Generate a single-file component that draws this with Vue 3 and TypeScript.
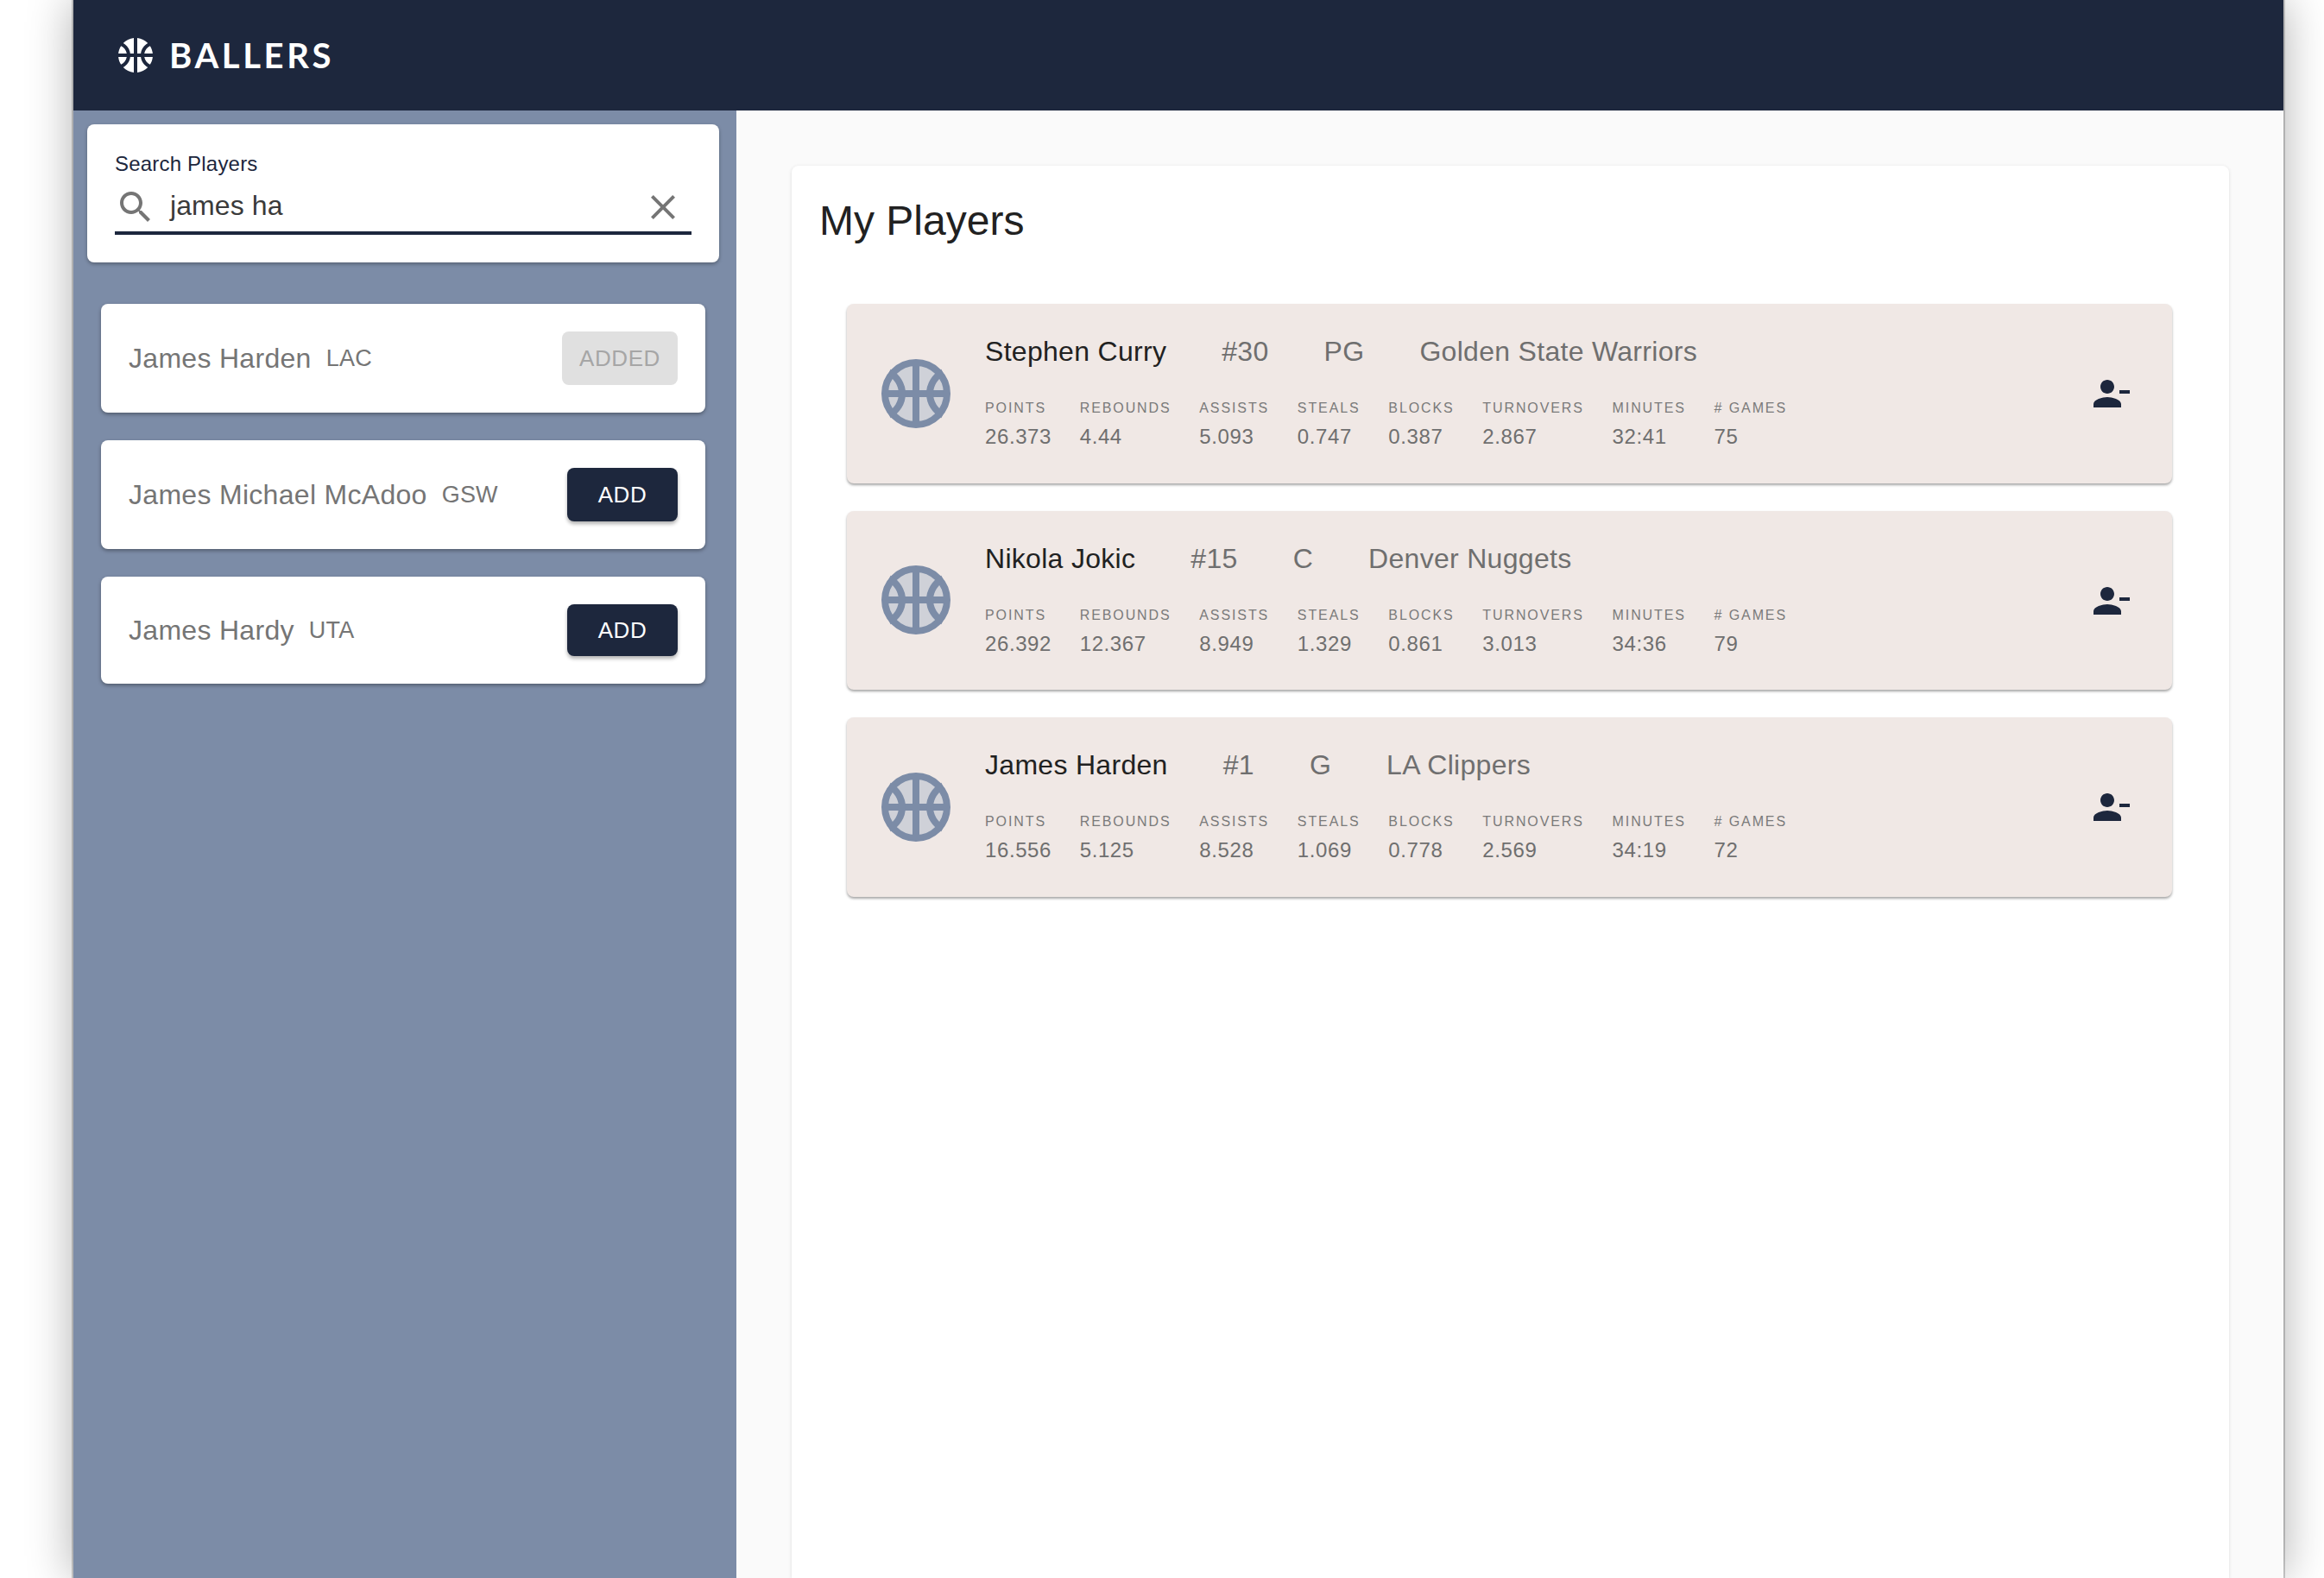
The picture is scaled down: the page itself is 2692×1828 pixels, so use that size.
<script setup lang="ts">
interface Result { name: string; team: string; added: boolean }
interface Stat { label: string; value: string }
interface Player { name: string; num: string; pos: string; team: string; values: string[] }

const results: Result[] = [
  { name: 'James Harden', team: 'LAC', added: true },
  { name: 'James Michael McAdoo', team: 'GSW', added: false },
  { name: 'James Hardy', team: 'UTA', added: false },
]
const labels = ['POINTS', 'REBOUNDS', 'ASSISTS', 'STEALS', 'BLOCKS', 'TURNOVERS', 'MINUTES', '# GAMES']
const players: Player[] = [
  { name: 'Stephen Curry', num: '#30', pos: 'PG', team: 'Golden State Warriors', values: ['26.373', '4.44', '5.093', '0.747', '0.387', '2.867', '32:41', '75'] },
  { name: 'Nikola Jokic', num: '#15', pos: 'C', team: 'Denver Nuggets', values: ['26.392', '12.367', '8.949', '1.329', '0.861', '3.013', '34:36', '79'] },
  { name: 'James Harden', num: '#1', pos: 'G', team: 'LA Clippers', values: ['16.556', '5.125', '8.528', '1.069', '0.778', '2.569', '34:19', '72'] },
]
const stats = (p: Player): Stat[] => labels.map((label, i) => ({ label, value: p.values[i] }))
const ball = 'M17.09 11h4.86c-.16-1.61-.71-3.11-1.54-4.4-1.73.83-2.99 2.45-3.32 4.4zM6.91 11c-.33-1.95-1.59-3.57-3.32-4.4-.83 1.29-1.38 2.79-1.54 4.4h4.86zM15.07 11c.32-2.59 1.88-4.79 4.06-6-1.6-1.63-3.74-2.71-6.13-2.95V11h2.07zM8.93 11H11V2.05C8.61 2.29 6.46 3.37 4.87 5c2.18 1.21 3.74 3.41 4.06 6zM15.07 13H13v8.95c2.39-.24 4.54-1.32 6.13-2.95-2.18-1.21-3.74-3.41-4.06-6zM3.59 17.4c1.72-.83 2.99-2.46 3.32-4.4H2.05c.16 1.61.71 3.11 1.54 4.4zM17.09 13c.33 1.95 1.59 3.57 3.32 4.4.83-1.29 1.38-2.79 1.54-4.4h-4.86zM8.93 13c-.32 2.59-1.88 4.79-4.06 6 1.6 1.63 3.74 2.71 6.13 2.95V13H8.93z'
</script>

<template>
  <div class="page">
    <div class="window">
      <header class="top">
        <svg class="logo" viewBox="0 0 24 24"><path :d="ball" fill="#fff" /></svg>
        <span class="brand">BALLERS</span>
      </header>
      <div class="body">
        <aside class="side">
          <div class="search">
            <label class="search-label">Search Players</label>
            <div class="search-row">
              <svg class="icon48" viewBox="0 0 24 24"><path fill="#757575" d="M15.5 14h-.79l-.28-.27C15.41 12.59 16 11.11 16 9.5 16 5.91 13.09 3 9.5 3S3 5.91 3 9.5 5.91 16 9.5 16c1.61 0 3.09-.59 4.23-1.57l.27.28v.79l5 4.99L20.49 19l-4.99-5zm-6 0C7.01 14 5 11.99 5 9.5S7.01 5 9.5 5 14 7.01 14 9.5 11.99 14 9.5 14z" /></svg>
              <span class="search-text">james ha</span>
              <svg class="icon48" viewBox="0 0 24 24"><path fill="#757575" d="M19 6.41 17.59 5 12 10.59 6.41 5 5 6.41 10.59 12 5 17.59 6.41 19 12 13.41 17.59 19 19 17.59 13.41 12z" /></svg>
            </div>
          </div>
          <ul class="results">
            <li v-for="r in results" :key="r.name" class="result">
              <span class="r-name">{{ r.name }}</span>
              <span class="r-team">{{ r.team }}</span>
              <button class="btn" :class="{ disabled: r.added }">{{ r.added ? 'ADDED' : 'ADD' }}</button>
            </li>
          </ul>
        </aside>
        <main class="main">
          <section class="panel">
            <h1 class="title">My Players</h1>
            <div class="players">
              <article v-for="p in players" :key="p.name" class="player">
                <svg class="ball" viewBox="0 0 24 24">
                  <circle cx="12" cy="12" r="9" fill="#cfd1d8" stroke="#7c8ca7" stroke-width="2" />
                  <g fill="none" stroke="#7c8ca7" stroke-width="2">
                    <path d="M12 3v18M3 12h18" />
                    <path d="M4.2 5.8C6.5 7 8 9.4 8 12c0 2.6-1.5 5-3.8 6.2" />
                    <path d="M19.8 5.8C17.5 7 16 9.4 16 12c0 2.6 1.5 5 3.8 6.2" />
                  </g>
                </svg>
                <div class="info">
                  <div class="headline">
                    <span class="p-name">{{ p.name }}</span>
                    <span>{{ p.num }}</span>
                    <span>{{ p.pos }}</span>
                    <span>{{ p.team }}</span>
                  </div>
                  <div class="stats">
                    <div v-for="s in stats(p)" :key="s.label" class="stat">
                      <span class="s-label">{{ s.label }}</span>
                      <span class="s-value">{{ s.value }}</span>
                    </div>
                  </div>
                </div>
                <svg class="icon48" viewBox="0 0 24 24"><path fill="#1d273d" d="M14 8c0-2.21-1.79-4-4-4S6 5.79 6 8s1.79 4 4 4 4-1.79 4-4zm3 2v2h6v-2h-6zM2 18v2h16v-2c0-2.66-5.33-4-8-4s-8 1.34-8 4z" /></svg>
              </article>
            </div>
          </section>
        </main>
      </div>
    </div>
  </div>
</template>

<style>
html, body { margin: 0; background: #fff; overflow: hidden; }
</style>

<style scoped>
.page {
  height: 1828px;
  overflow: hidden;
  padding: 0 47px 0 85px;
  box-sizing: border-box;
  font-family: "Liberation Sans", Arial, sans-serif;
}
.window {
  height: 100%;
  display: flex;
  flex-direction: column;
  background: #fafafa;
  box-shadow: 0 0 0 2px rgba(0, 0, 0, 0.18), 0 0 50px rgba(0, 0, 0, 0.32);
}
.top {
  height: 128px;
  flex: none;
  display: flex;
  align-items: center;
  background: #1d273d;
  padding-left: 48px;
  box-sizing: border-box;
}
.logo { width: 48px; height: 48px; }
.brand {
  margin-left: 15px;
  font-family: Lato, sans-serif;
  font-weight: 700;
  font-size: 40px;
  letter-spacing: 3.6px;
  color: #fff;
}
.body { flex: 1; display: flex; min-height: 0; }
.side {
  width: 768px;
  flex: none;
  box-sizing: border-box;
  background: #7c8ca7;
  padding: 16px 20px 0 16px;
}
.search {
  height: 160px;
  box-sizing: border-box;
  background: #fff;
  border-radius: 8px;
  padding: 33px 32px 0;
  box-shadow: 0 2px 4px rgba(0, 0, 0, 0.3);
}
.search-label {
  display: block;
  font-size: 24px;
  line-height: 26px;
  letter-spacing: 0.2px;
  color: #1d273d;
}
.search-row {
  display: flex;
  align-items: center;
  height: 56px;
  margin-top: 9px;
  padding-right: 9px;
  border-bottom: 4px solid #1d273d;
}
.search-text {
  flex: 1;
  margin-left: 16px;
  padding-bottom: 4px;
  font-size: 32px;
  letter-spacing: 0.1px;
  color: #3a3a3a;
}
.icon48 { width: 48px; height: 48px; flex: none; }
.results {
  list-style: none;
  margin: 48px 0 0;
  padding: 0 16px;
  display: flex;
  flex-direction: column;
  gap: 32px;
}
.result {
  height: 126px;
  box-sizing: border-box;
  display: flex;
  align-items: center;
  padding: 0 32px;
  background: #fff;
  border-radius: 8px;
  box-shadow: 0 2px 4px rgba(0, 0, 0, 0.35);
}
.result:last-child { height: 124px; }
.r-name { font-size: 32px; letter-spacing: 0.3px; color: #757575; }
.r-team { margin-left: 17px; font-size: 27px; letter-spacing: 0.2px; color: #757575; }
.btn {
  margin-left: auto;
  width: 128px;
  height: 62px;
  border: 0;
  border-radius: 8px;
  background: #1d273d;
  color: #fff;
  font-family: inherit;
  font-size: 26px;
  letter-spacing: 0.6px;
  box-shadow: 0 3px 4px rgba(0, 0, 0, 0.3);
}
.result:last-child .btn { height: 60px; }
.btn.disabled {
  width: 134px;
  background: #e0e0e0;
  color: #a6a6a6;
  box-shadow: none;
}
.main {
  flex: 1;
  min-width: 0;
  padding: 64px 63px 0 64px;
  background: #fafafa;
}
.panel {
  height: 100%;
  box-sizing: border-box;
  background: #fff;
  border-radius: 8px 8px 0 0;
  padding: 32px 66px 0 32px;
  box-shadow: 0 1px 4px rgba(0, 0, 0, 0.12);
}
.title {
  margin: 0;
  font-size: 48px;
  line-height: 64px;
  font-weight: 400;
  color: #212121;
}
.players {
  margin: 64px 0 0 32px;
  display: flex;
  flex-direction: column;
  gap: 32px;
}
.player {
  height: 208px;
  box-sizing: border-box;
  display: flex;
  align-items: center;
  padding: 0 47px 0 32px;
  background: #f0e8e5;
  border-radius: 8px;
  box-shadow: 0 2px 3px rgba(0, 0, 0, 0.35);
}
.player:nth-child(2) { height: 207px; }
.ball { width: 96px; height: 96px; flex: none; margin-top: -1px; }
.info { flex: 1; margin-left: 32px; padding-bottom: 5px; display: flex; flex-direction: column; }
.headline {
  display: flex;
  gap: 64px;
  font-size: 32px;
  line-height: 40px;
  letter-spacing: 0.3px;
  color: #6f6f6f;
}
.p-name { color: #212121; }
.stats { display: flex; gap: 32.7px; margin-top: 36px; }
.stat { display: flex; flex-direction: column; }
.s-label {
  font-size: 16px;
  line-height: 20px;
  letter-spacing: 1.9px;
  color: #7a7a7a;
}
.s-value {
  margin-top: 9px;
  font-size: 24px;
  line-height: 28px;
  letter-spacing: 0.6px;
  color: #6f6f6f;
}
</style>
